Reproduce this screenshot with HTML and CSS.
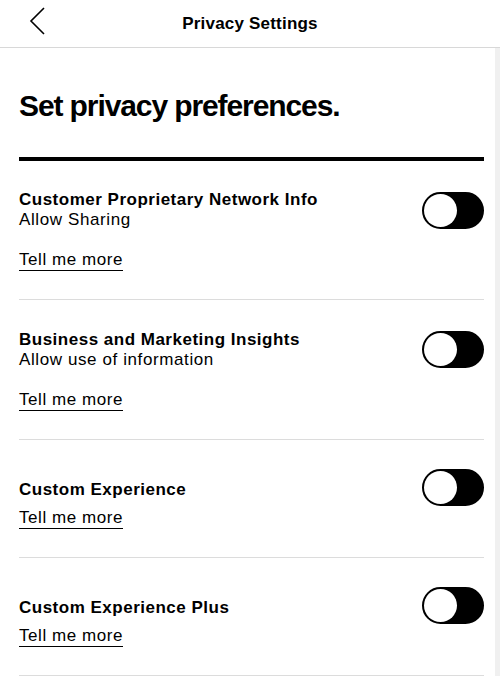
FILE: index.html
```html
<!DOCTYPE html>
<html lang="en">
<head>
    <meta charset="UTF-8">
    <meta name="viewport" content="width=device-width, initial-scale=1.0">
    <title>Privacy Settings</title>
    <link rel="stylesheet" href="styles.css">
</head>
<body>
<div class="header">
    <a class="back" href="#">
        <svg width="18" height="30" viewBox="0 0 18 30">
            <path d="M16 2 L3 15 L16 28" fill="none" stroke="#000" stroke-width="1.6"/>
        </svg>
    </a>
    <div class="header-title">Privacy Settings</div>
</div>

<div class="content">
    <h1>Set privacy preferences.</h1>

    <div class="item first">
        <div class="item-text">
            <div class="item-title">Customer Proprietary Network Info</div>
            <div class="item-sub">Allow Sharing</div>
            <a class="more spaced" href="#">Tell me more</a>
        </div>
        <div class="toggle"><span class="knob"></span></div>
    </div>

    <div class="item">
        <div class="item-text">
            <div class="item-title">Business and Marketing Insights</div>
            <div class="item-sub">Allow use of information</div>
            <a class="more spaced" href="#">Tell me more</a>
        </div>
        <div class="toggle"><span class="knob"></span></div>
    </div>

    <div class="item tall">
        <div class="item-text">
            <div class="item-title">Custom Experience</div>
            <a class="more" href="#">Tell me more</a>
        </div>
        <div class="toggle"><span class="knob"></span></div>
    </div>

    <div class="item tall">
        <div class="item-text">
            <div class="item-title">Custom Experience Plus</div>
            <a class="more" href="#">Tell me more</a>
        </div>
        <div class="toggle"><span class="knob"></span></div>
    </div>
</div>
</body>
</html>
```

FILE: styles.css
```css
body {
    margin: 0;
    padding: 0;
    font-family: "Liberation Sans", Arial, sans-serif;
    color: #000;
    background-color: #fff;
}

/* top bar */
.header {
    height: 47px;
    border-bottom: 1px solid #d8d8d8;
    display: flex;
    align-items: center;
    justify-content: center;
    position: relative;
}

.back {
    position: absolute;
    left: 28px;
    top: 6px;
}

.header-title {
    font-size: 17px;
    font-weight: bold;
    letter-spacing: 0.2px;
}

/* scroll area, light track on the right */
.content {
    padding: 0 11px 0 19px;
    border-right: 5px solid #f0f0f0;
}

h1 {
    margin: 0;
    padding: 40px 0 33px;
    font-size: 30px;
    line-height: 36px;
    letter-spacing: -1.1px;
    border-bottom: 4px solid #000;
}

.item {
    display: flex;
    justify-content: space-between;
    align-items: flex-start;
    padding: 30px 0 28px;
    border-bottom: 1px solid #dcdcdc;
}

.item.first {
    padding-top: 29px;
}

.item.tall {
    padding: 29px 0 28px;
}

.item.tall .item-text {
    margin-top: 11px;
}

.item-title {
    font-size: 17px;
    font-weight: bold;
    letter-spacing: 0.5px;
    line-height: 20px;
}

.item-sub {
    font-size: 17px;
    letter-spacing: 0.6px;
    line-height: 20px;
}

.more {
    display: inline-block;
    margin-top: 8px;
    font-size: 17px;
    letter-spacing: 0.55px;
    color: #000;
    text-decoration: none;
    border-bottom: 1px solid #000;
    line-height: 20px;
}

.more.spaced {
    margin-top: 20px;
}

/* switch */
.toggle {
    width: 62px;
    height: 37px;
    box-sizing: border-box;
    border-radius: 19px;
    background-color: #000;
    border: 2px solid #000;
    margin-top: 1px;
}

.item.first .toggle {
    margin-top: 2px;
}

.item.tall .toggle {
    margin-top: 0;
}

.knob {
    display: block;
    width: 33px;
    height: 33px;
    border-radius: 50%;
    background-color: #fff;
}
```
